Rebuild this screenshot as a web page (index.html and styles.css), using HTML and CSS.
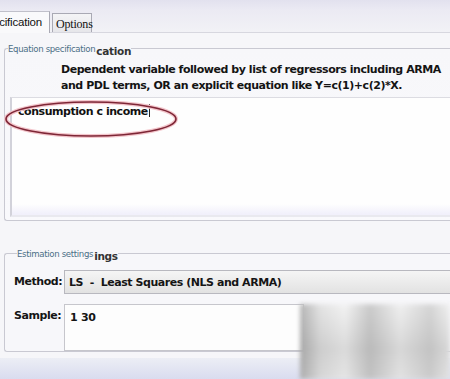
FILE: index.html
```html
<!DOCTYPE html>
<html>
<head>
<meta charset="utf-8">
<link rel="stylesheet" href="styles.css">
</head>
<body>
<div class="screen">
  <div class="tabbar">
    <div class="tab active">ecification</div>
    <div class="tab">Options</div>
  </div>
  <div class="panel">
    <fieldset class="group eq">
      <legend><span class="small">Equation specification</span><span class="ghost">cation</span></legend>
      <p class="desc">Dependent variable followed by list of regressors including ARMA<br>and PDL terms, OR an explicit equation like Y=c(1)+c(2)*X.</p>
      <div class="editor">consumption c income<span class="caret"></span></div>
      <svg class="ring" width="180" height="44" viewBox="0 0 180 44">
        <ellipse cx="89" cy="21" rx="85" ry="17" fill="none" stroke="#f3c6cc" stroke-width="4"/>
        <ellipse cx="89" cy="21" rx="85" ry="17" fill="none" stroke="#7e2636" stroke-width="1.6"/>
      </svg>
    </fieldset>
    <fieldset class="group est">
      <legend><span class="small">Estimation settings</span><span class="ghost">ings</span></legend>
      <div class="row">
        <span class="lbl">Method:</span>
        <div class="select">LS &nbsp;- &nbsp;Least Squares (NLS and ARMA)</div>
      </div>
      <div class="row">
        <span class="lbl">Sample:</span>
        <div class="sample">1 30</div>
      </div>
    </fieldset>
  </div>
  <div class="footer"></div>
  <div class="blur"></div>
</div>
</body>
</html>
```
FILE: styles.css
```css
html, body {
  margin: 0;
  padding: 0;
}
body {
  width: 450px;
  height: 379px;
  overflow: hidden;
  font-family: "DejaVu Sans", "Liberation Sans", sans-serif;
  background: #f6f6f9;
}
.screen {
  position: relative;
  width: 450px;
  height: 379px;
  overflow: hidden;
}
.tabbar {
  height: 33px;
  display: flex;
  align-items: flex-end;
  background: linear-gradient(#e2e1ee 0, #ebeaf3 10px, #f2f2f6 33px);
  border-bottom: 1px solid #d7d7df;
  box-sizing: border-box;
}
.tab {
  font-family: "Liberation Serif", serif;
  font-size: 12px;
  color: #111;
  box-sizing: border-box;
}
.tab.active {
  height: 22px;
  width: 50px;
  padding: 4px 0 0 0;
  text-indent: -7px;
  font-family: "Liberation Sans", sans-serif;
  font-size: 11.5px;
  letter-spacing: -0.2px;
  background: #f9f9fb;
  border-right: 1px solid #a9a9b4;
  border-top: 1px solid #c0c0ca;
  margin-bottom: -1px;
  white-space: nowrap;
  overflow: hidden;
}
.tab:not(.active) {
  height: 19px;
  width: 40px;
  margin-left: 2px;
  padding: 3px 0 0 3px;
  background: linear-gradient(#f4f4f6, #e6e6ea);
  border: 1px solid #a9a9b4;
  border-bottom: none;
  letter-spacing: -0.2px;
}
.panel {
  padding: 8px 0 0 4px;
}
.group {
  margin: 0;
  padding: 0;
  border: 1px solid #c9c9d2;
  border-right: none;
  border-radius: 3px 0 0 3px;
  position: relative;
}
legend {
  padding: 0;
  margin-left: 3px;
  line-height: 12px;
  white-space: nowrap;
}
.small {
  font-family: "DejaVu Sans", sans-serif;
  font-size: 8.6px;
  color: #4b6f86;
  letter-spacing: -0.35px;
}
.ghost {
  font-family: "DejaVu Sans", sans-serif;
  font-weight: bold;
  font-size: 10.5px;
  color: #333;
  position: relative;
  top: 3px;
  margin-left: 1px;
  letter-spacing: -0.3px;
}
.eq {
  height: 180px;
  box-sizing: border-box;
  background: linear-gradient(#f7f7fa, #f9f9fc);
}
.desc {
  margin: 7px 0 0 56px;
  font-family: "DejaVu Sans", sans-serif;
  font-weight: bold;
  font-size: 11px;
  line-height: 16px;
  color: #141414;
  letter-spacing: -0.45px;
  white-space: nowrap;
}
.editor {
  margin: 3px 0 0 5px;
  height: 120px;
  box-sizing: border-box;
  background: linear-gradient(#fefefe 0, #fefefe 106px, #f1f0fb 116px);
  border-left: 2px solid #d2d2da;
  border-top: 1px solid #dcdce2;
  border-bottom: 2px solid #e9e9ef;
  padding: 6px 0 0 6px;
  font-family: "DejaVu Sans", sans-serif;
  font-weight: bold;
  font-size: 11px;
  color: #111;
  letter-spacing: -0.45px;
}
.caret {
  display: inline-block;
  width: 1px;
  height: 13px;
  background: #222;
  vertical-align: -2px;
  margin-left: 1px;
}
.ring {
  position: absolute;
  left: -3px;
  top: 43px;
}
.est {
  margin-top: 25px;
  height: 106px;
  box-sizing: border-box;
  padding: 10px 0 0 9px;
  background: #f7f7fa;
}
.row {
  display: flex;
  align-items: flex-start;
  margin-bottom: 10px;
}
.lbl {
  width: 50px;
  font-family: "DejaVu Sans", sans-serif;
  font-weight: bold;
  font-size: 11px;
  color: #151515;
  letter-spacing: -0.45px;
  padding-top: 5px;
}
.select {
  flex: 1;
  height: 24px;
  box-sizing: border-box;
  padding: 5px 0 0 4px;
  background: linear-gradient(#f5f5f5, #e2e2e2);
  border: 1px solid #b8b8bf;
  border-right: none;
  font-family: "DejaVu Sans", sans-serif;
  font-weight: bold;
  font-size: 11px;
  color: #151515;
  letter-spacing: -0.45px;
  white-space: nowrap;
}
.sample {
  width: 240px;
  height: 47px;
  box-sizing: border-box;
  padding: 6px 0 0 5px;
  background: #fdfdfd;
  border: 1px solid #c6c6cc;
  font-family: "DejaVu Sans", sans-serif;
  font-weight: bold;
  font-size: 11px;
  color: #151515;
  letter-spacing: -0.3px;
}
.footer {
  position: absolute;
  left: 0;
  right: 0;
  top: 358px;
  height: 21px;
  background: linear-gradient(#eceef5, #d9dcef);
}
.blur {
  position: absolute;
  left: 300px;
  top: 304px;
  width: 150px;
  height: 75px;
  background:
    linear-gradient(90deg, rgba(140,140,140,0.6) 0, rgba(200,200,200,0.35) 20px, rgba(245,245,245,0.3) 45px, rgba(165,165,165,0.5) 70px, rgba(235,235,235,0.3) 100px, rgba(180,180,180,0.45) 130px, rgba(240,240,240,0.3) 150px),
    linear-gradient(#f2f2f2, #cfcfcf 60%, #dedede);
  filter: blur(2px);
}
```
